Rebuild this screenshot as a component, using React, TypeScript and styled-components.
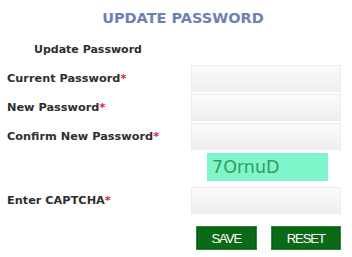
import React from 'react';
import styled, { createGlobalStyle } from 'styled-components';

const GlobalStyle = createGlobalStyle`
  html, body {
    margin: 0;
    padding: 0;
    background: #ffffff;
  }
  body {
    font-family: "DejaVu Sans", Verdana, sans-serif;
  }
`;

const Page = styled.div`
  width: 352px;
  height: 257px;
  box-sizing: border-box;
  padding-top: 9px;
  overflow: hidden;
`;

const Title = styled.h1`
  margin: 0 0 0 93px;
  width: 180px;
  text-align: center;
  font-size: 14.5px;
  font-weight: bold;
  color: #6d80b6;
  line-height: 18px;
  white-space: nowrap;
`;

const SubTitle = styled.h2`
  margin: 16px 0 0 34px;
  font-size: 11px;
  font-weight: bold;
  color: #2f2f2f;
  line-height: 14px;
`;

const Form = styled.div`
  margin-top: 8px;
  display: grid;
  grid-template-columns: 184px 150px;
  row-gap: 2px;
  padding-left: 7px;
`;

const Label = styled.label`
  font-size: 11.3px;
  font-weight: bold;
  color: #2f2f2f;
  display: flex;
  align-items: center;
  height: 27px;
  white-space: nowrap;
`;

const Star = styled.span`
  color: #e0252b;
`;

const Input = styled.input`
  width: 150px;
  height: 27px;
  box-sizing: border-box;
  border: 1px solid #ececec;
  background: linear-gradient(#fbfbfb, #eeeeee);
  outline: none;
  margin: 0;
`;

const CaptchaCell = styled.div`
  grid-column: 2;
  padding: 1px 0 4px 16px;
`;

const Captcha = styled.div`
  width: 121px;
  height: 28px;
  background: #7ef6c9;
  color: #3a9a5c;
  font-family: "DejaVu Sans", Verdana, sans-serif;
  font-size: 17.5px;
  line-height: 28px;
  padding-left: 5px;
  box-sizing: border-box;
`;

const Actions = styled.div`
  grid-column: 2;
  display: flex;
  gap: 14px;
  padding: 10px 0 0 5px;
`;

const Button = styled.button<{ $width: number }>`
  width: ${(p) => p.$width}px;
  height: 24px;
  background: #0b6a17;
  border: 1px solid #2d8a3a;
  box-shadow: inset 0 0 0 1px #0a5a14;
  color: #ffffff;
  font-family: "Liberation Sans", Arial, sans-serif;
  font-size: 13px;
  letter-spacing: -1px;
  padding: 0;
`;

export default function App() {
  return (
    <Page>
      <GlobalStyle />
      <Title>UPDATE PASSWORD</Title>
      <SubTitle>Update Password</SubTitle>
      <Form>
        <Label>
          Current Password<Star>*</Star>
        </Label>
        <Input type="password" />
        <Label>
          New Password<Star>*</Star>
        </Label>
        <Input type="password" />
        <Label>
          Confirm New Password<Star>*</Star>
        </Label>
        <Input type="password" />
        <CaptchaCell>
          <Captcha>7OrnuD</Captcha>
        </CaptchaCell>
        <Label>
          Enter CAPTCHA<Star>*</Star>
        </Label>
        <Input type="text" />
        <Actions>
          <Button $width={62}>SAVE</Button>
          <Button $width={72}>RESET</Button>
        </Actions>
      </Form>
    </Page>
  );
}
